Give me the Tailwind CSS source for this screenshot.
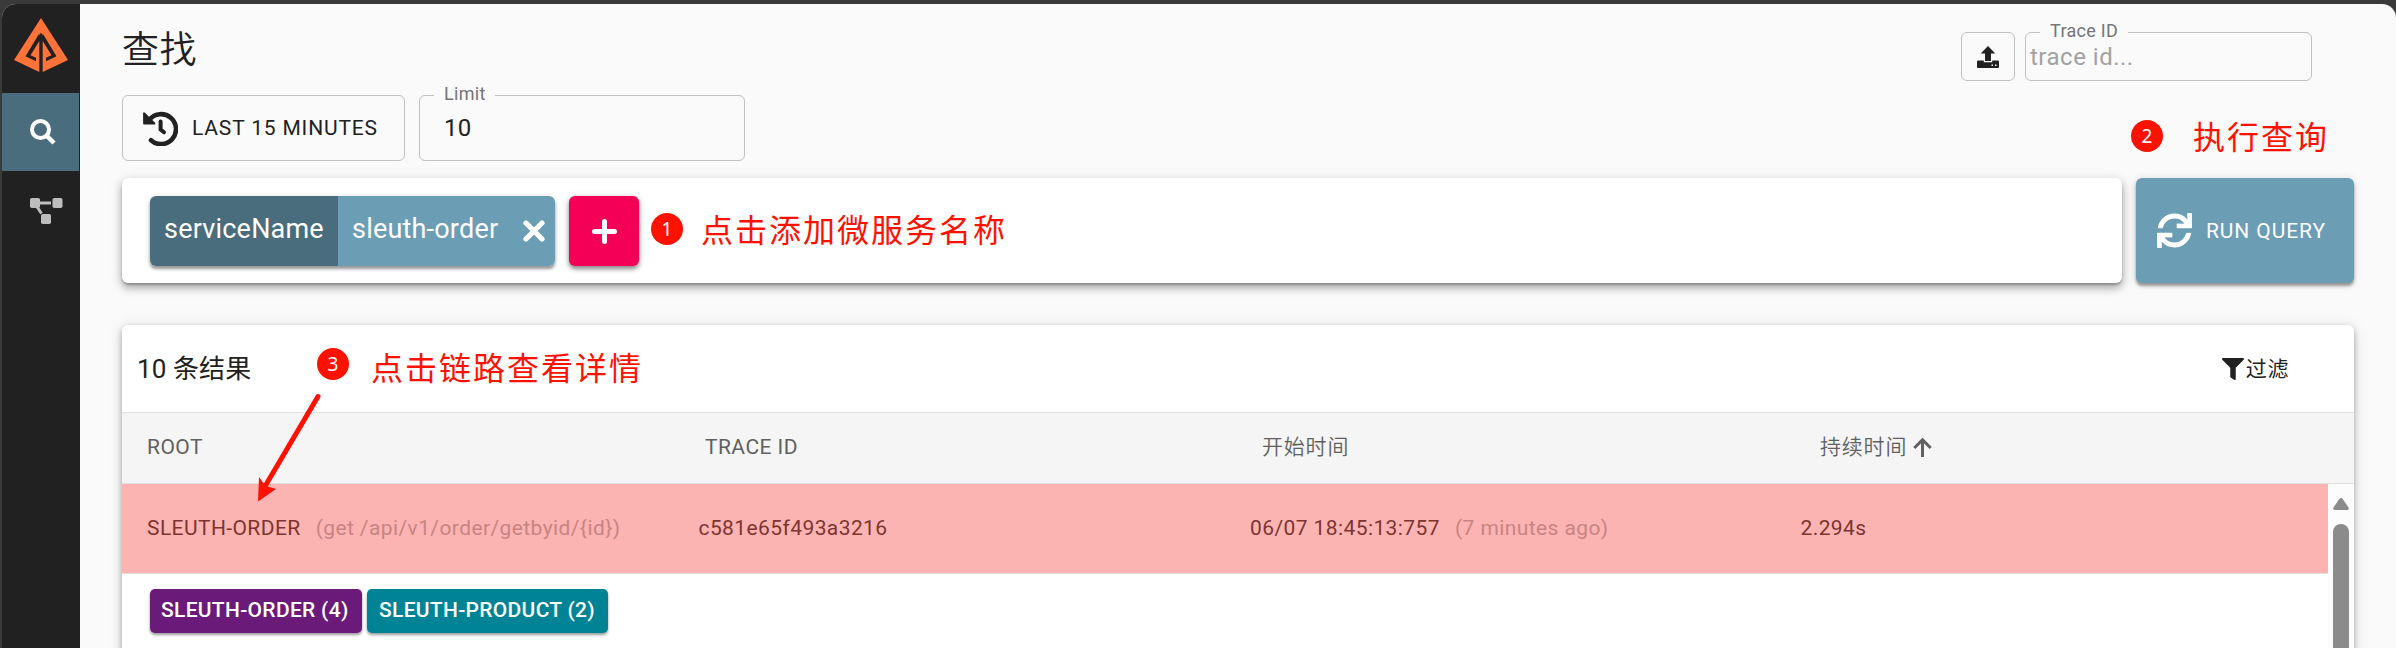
<!DOCTYPE html>
<html lang="zh-CN">
<head>
<meta charset="utf-8">
<title>Zipkin</title>
<script src="https://cdn.jsdelivr.net/npm/@tailwindcss/browser@4"></script>
</head>
<body class="relative h-[648px] w-[2396px] overflow-hidden bg-[#3a3a3a] pl-[2px] pt-[4px] font-['Roboto','Noto_Sans_CJK_SC',sans-serif] text-[21px] leading-[30px] text-[#212121]">
<div class="flex h-[644px] w-[2394px] overflow-hidden rounded-t-[14px] bg-[#fafafa]">
  <nav class="flex w-[78px] shrink-0 flex-col bg-[#212121]">
    <div class="flex h-[89px] justify-center pt-[14px]">
      <svg class="h-[54px] w-[54px]" viewBox="0 0 54 54" fill="#ff7338"><path fill-rule="evenodd" d="M27 0 54 42 28.700 54V17.500L27 14.500 25.300 17.500V54L0 42ZM25.300 15.500 11.500 38.300 22 43.300V39.800L16.500 37.200 25.300 23ZM28.700 15.500V23L37.500 37.200 32 39.800V43.300L42.500 38.300Z"/></svg>
    </div>
    <div class="flex h-[78px] w-[77px] items-center justify-center bg-[#4a6d7d]">
      <svg class="ml-[4px] h-[26px] w-[26px]" viewBox="0 0 26 26" fill="none" stroke="#fff"><circle cx="10.500" cy="10.500" r="8.500" stroke-width="4"/><path d="m17 17 7 7" stroke-width="4.500"/></svg>
    </div>
    <div class="flex h-[78px] pl-[28px] pt-[27px]">
      <svg class="h-[26px] w-[33px]" viewBox="0 0 33 26" fill="#bdbdbd"><rect width="10" height="10" rx="1.800"/><rect x="22.500" width="10" height="10" rx="1.800"/><rect x="11" y="16" width="10" height="10" rx="1.800"/><path d="M9 5h12M6.500 8l5 7.500" stroke="#bdbdbd" stroke-width="3"/></svg>
    </div>
  </nav>
  <main class="relative flex w-[2316px] shrink-0 flex-col pl-[42px]">
    <div class="flex h-[91px] shrink-0 justify-between pr-[84px]">
      <h1 class="pt-[20px] text-[37px] leading-[54px] font-[350] tracking-[0.5px]">查找</h1>
      <div class="flex gap-[10px] pt-[28px]">
        <button class="flex h-[49px] w-[54px] items-center justify-center rounded-[6px] border border-[#c0c0c0]">
          <svg class="h-[22px] w-[22px]" viewBox="0 0 22 22" fill="#212121"><path d="M11 0 18.300 7.500H14V15H8V7.500H3.700Z"/><path fill-rule="evenodd" d="M1 14.500H6.800V16.200H15.200V14.500H21A1 1 0 0 1 22 15.500V21A1 1 0 0 1 21 22H1A1 1 0 0 1 0 21V15.500A1 1 0 0 1 1 14.500ZM14.500 18.500V20H16V18.500ZM18 18.500V20H19.500V18.500Z"/></svg>
        </button>
        <div class="relative flex h-[49px] w-[287px] items-center rounded-[6px] border border-[#c0c0c0] pl-[4px] text-[24px] text-[#a2a2a2]">
          <span class="absolute -top-[13px] left-[14px] w-[88px] bg-[#fafafa] pl-[10px] text-[18px] leading-[22px] tracking-[0.3px] text-[#757575]">Trace ID</span>
          <span class="tracking-[0.5px]">trace id...</span>
        </div>
      </div>
    </div>
    <div class="flex h-[83px] shrink-0 gap-[14px]">
      <button class="flex h-[66px] w-[283px] items-center rounded-[6px] border border-[#c0c0c0] pl-[20px]">
        <svg class="h-[35px] w-[35px]" viewBox="0 0 35 35" fill="none" stroke="#212121"><path d="M6.500 8.500A15 15 0 1 1 8 29.300" stroke-width="4.600" stroke-linecap="round"/><path d="M1 2.200V12.500H11.500Z" fill="#212121" stroke-width="1.800" stroke-linejoin="round"/><path d="M17.600 10.500V18.500L21 21.200" stroke-width="4" stroke-linecap="round"/></svg>
        <span class="ml-[14px] tracking-[0.83px] whitespace-nowrap">LAST 15 MINUTES</span>
      </button>
      <div class="relative flex h-[66px] w-[326px] items-center rounded-[6px] border border-[#c0c0c0] pl-[24px] text-[24px]">
        <span class="absolute -top-[13px] left-[14px] w-[61px] bg-[#fafafa] pl-[10px] text-[18px] leading-[22px] tracking-[0.3px] text-[#757575]">Limit</span>
        <span class="tracking-[0.3px]">10</span>
      </div>
    </div>
    <div class="flex h-[147px] shrink-0 gap-[14px]">
      <section class="flex h-[105px] w-[2000px] gap-[14px] rounded-[6px] bg-white pl-[28px] pt-[18px] shadow-[0_5px_8px_rgba(0,0,0,.28),0_2px_2px_rgba(0,0,0,.2),0_2px_14px_rgba(0,0,0,.12)]">
        <div class="flex h-[70px] w-[405px] overflow-hidden rounded-[6px] text-[27px] leading-[66px] tracking-[0.2px] text-white shadow-[0_3px_3px_rgba(0,0,0,.35),0_1px_6px_rgba(0,0,0,.15)]">
          <div class="w-[188px] bg-[#4a6d7d] pl-[14px]">serviceName</div>
          <div class="flex w-[217px] bg-[#6b9db5] pl-[14px]"><span class="w-[171px]">sleuth-order</span>
            <svg class="mt-[24px] h-[22px] w-[22px]" viewBox="0 0 22 22" stroke="#fff" stroke-width="5.200" stroke-linecap="round"><path d="m3 3 16 16M19 3 3 19"/></svg></div>
        </div>
        <button class="flex h-[70px] w-[70px] items-center justify-center rounded-[6px] bg-[#f50057] shadow-[0_3px_4px_rgba(0,0,0,.4),0_1px_8px_rgba(0,0,0,.15)]">
          <svg class="h-[25px] w-[25px]" viewBox="0 0 25 25" stroke="#fff" stroke-width="5" stroke-linecap="round"><path d="M12.500 2.500v20M2.500 12.500h20"/></svg>
        </button>
      </section>
      <button class="flex h-[105px] w-[218px] items-center rounded-[6px] bg-[#6b9db5] pl-[21px] text-white shadow-[0_3px_3px_rgba(0,0,0,.35),0_1px_8px_rgba(0,0,0,.15)]">
        <svg class="h-[35px] w-[35px]" viewBox="0 0 512 512" fill="#fff"><path d="M440.650 12.570l4 82.770A247.160 247.160 0 0 0 255.830 8C134.730 8 33.910 94.920 12.290 209.820A12 12 0 0 0 24.090 224h49.050a12 12 0 0 0 11.670-9.260 175.910 175.910 0 0 1 317-56.940l-101.460-4.860a12 12 0 0 0-12.570 12v47.410a12 12 0 0 0 12 12H500a12 12 0 0 0 12-12V12a12 12 0 0 0-12-12h-47.370a12 12 0 0 0-11.980 12.570zM255.830 432a175.610 175.610 0 0 1-146-77.800l101.800 4.870a12 12 0 0 0 12.570-12v-47.400a12 12 0 0 0-12-12H12a12 12 0 0 0-12 12V500a12 12 0 0 0 12 12h47.350a12 12 0 0 0 12-12.600l-4.150-82.570A247.170 247.170 0 0 0 255.830 504c121.110 0 221.930-86.920 243.550-201.820a12 12 0 0 0-11.800-14.180h-49.050a12 12 0 0 0-11.670 9.260A175.860 175.860 0 0 1 255.830 432z"/></svg>
        <span class="ml-[14px] tracking-[0.9px] whitespace-nowrap">RUN QUERY</span>
      </button>
    </div>
    <section class="flex h-[340px] w-[2232px] shrink-0 flex-col rounded-[6px] bg-white shadow-[0_3px_6px_rgba(0,0,0,.3),0_2px_16px_rgba(0,0,0,.12)]">
      <header class="flex h-[87px] items-center justify-between pl-[15px] pr-[65px]">
        <h2 class="text-[26px] leading-[40px] tracking-[0.1px]">10 条结果</h2>
        <div class="flex items-center gap-[2px]"><svg class="h-[22px] w-[22px]" viewBox="0 0 512 512" fill="#212121"><path d="M487.976 0H24.028C2.710 0-8.047 25.866 7.058 40.971L192 225.941V432c0 7.831 3.821 15.170 10.237 19.662l80 55.980C298.020 518.690 320 507.493 320 487.980V225.941l184.947-184.970C520.021 25.896 509.338 0 487.976 0z"/></svg><span class="tracking-[0.6px]">过滤</span></div>
      </header>
      <div class="grid h-[72px] grid-cols-4 items-center border-y border-[#e0e0e0] bg-[#f5f5f5] pb-[2px] text-[#606060]">
        <div class="pl-[25px] tracking-[0.45px]">ROOT</div>
        <div class="pl-[25px] tracking-[0.45px]">TRACE ID</div>
        <div class="pl-[24px] font-[350] tracking-[0.8px]">开始时间</div>
        <div class="flex items-center gap-[6px] pl-[24px] font-[350] tracking-[0.8px]">持续时间<svg class="h-[19px] w-[19px]" viewBox="0 0 19 19" fill="none" stroke="#606060" stroke-width="3"><path d="M9.500 19V2M1.300 10 9.500 1.800 17.700 10"/></svg></div>
      </div>
      <div class="flex h-[181px]">
        <div class="w-[2206px]">
          <div class="grid h-[90px] grid-cols-4 items-center border-b border-[#e0e0e0] bg-[#fbb4b2] pb-[2px] tracking-[0.41px] text-[#7d3431]">
            <div class="flex pl-[25px] whitespace-nowrap">SLEUTH-ORDER<span class="ml-[15px] text-[#c88482]">(get /api/v1/order/getbyid/{id})</span></div>
            <div class="pl-[25px]">c581e65f493a3216</div>
            <div class="flex pl-[25px] whitespace-nowrap">06/07 18:45:13:757<span class="ml-[15px] text-[#c88482]">(7 minutes ago)</span></div>
            <div class="pl-[24px]">2.294s</div>
          </div>
          <div class="flex gap-[5px] pl-[28px] pt-[15px] font-medium tracking-[0.3px] text-white">
            <span class="h-[44px] w-[212px] rounded-[5px] bg-[#6a1b7a] pl-[11px] leading-[42px] whitespace-nowrap shadow-[0_2px_3px_rgba(0,0,0,.4)]">SLEUTH-ORDER (4)</span>
            <span class="h-[44px] w-[241px] rounded-[5px] bg-[#008394] pl-[12px] leading-[42px] whitespace-nowrap shadow-[0_2px_3px_rgba(0,0,0,.4)]">SLEUTH-PRODUCT (2)</span>
          </div>
        </div>
        <div class="flex w-[26px] flex-col items-center bg-[#fcfcfc] pt-[14px]">
          <svg class="h-[12px] w-[16px] shrink-0" viewBox="0 0 16 12" fill="#8b8b8b"><path d="M6.300 1Q8-.900 9.700 1L15.500 9.500Q16.500 12 14 12H2Q-.500 12 .500 9.500Z"/></svg>
          <div class="mt-[14px] h-[150px] w-[16px] shrink-0 rounded-t-full bg-[#8b8b8b]"></div>
        </div>
      </div>
    </section>
  </main>
</div>
<div class="absolute left-[651px] top-[213px] flex items-start text-[#ff1100]">
  <span class="size-[32px] rounded-full bg-[#ff1100] text-center font-['Noto_Sans'] text-[19px] leading-[33px] text-white">1</span>
  <span class="mt-[1px] ml-[18px] text-[32px] leading-[34px] tracking-[2px]">点击添加微服务名称</span>
</div>
<div class="absolute left-[2131px] top-[120px] flex items-start text-[#ff1100]">
  <span class="size-[32px] rounded-full bg-[#ff1100] text-center font-['Noto_Sans'] text-[19px] leading-[33px] text-white">2</span>
  <span class="mt-[1px] ml-[30px] text-[32px] leading-[34px] tracking-[2px]">执行查询</span>
</div>
<div class="absolute left-[317px] top-[348px] flex items-start text-[#ff1100]">
  <span class="size-[32px] rounded-full bg-[#ff1100] text-center font-['Noto_Sans'] text-[19px] leading-[33px] text-white">3</span>
  <span class="mt-[4px] ml-[22px] text-[32px] leading-[34px] tracking-[2px]">点击链路查看详情</span>
</div>
<svg class="absolute left-[250px] top-[390px] h-[116px] w-[76px]" viewBox="250 390 76 116" fill="#ff1100"><path d="M318 396.500 264 488" stroke="#ff1100" stroke-width="5" stroke-linecap="round"/><path d="M258 501.500 259 477 265.500 486 276 489Z"/></svg>
</body>
</html>
